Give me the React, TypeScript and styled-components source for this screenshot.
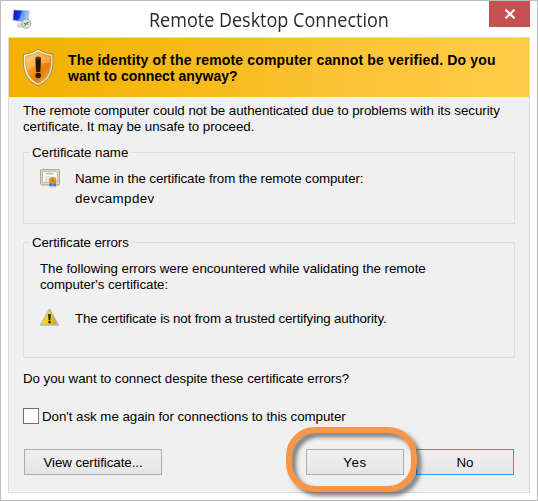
import React from 'react';
import styled, { createGlobalStyle } from 'styled-components';

const GlobalStyle = createGlobalStyle`
  * { box-sizing: border-box; }
  body { margin: 0; background: #fff; }
`;

const Window = styled.div`
  width: 538px;
  height: 501px;
  display: flex;
  flex-direction: column;
  border: 1px solid #bcbcbc;
  background: #fff;
  font: 13.333px/16px "Liberation Sans", Arial, sans-serif;
  color: #000;
  overflow: hidden;
`;

const TitleBar = styled.header`
  height: 36px;
  flex: none;
  display: flex;
  align-items: flex-start;
  padding-left: 11px;
`;

const TitleIcon = styled.svg`
  flex: none;
  width: 20px;
  height: 20px;
  margin-top: 8px;
`;

const Title = styled.h1`
  flex: 1;
  margin: 5px 0 0 117px;
  font: 400 20px/28px "Open Sans", "Noto Sans", sans-serif;
  color: #2b2b2b;
  white-space: nowrap;
  transform: scaleX(0.9);
  transform-origin: 0 50%;
`;

const CloseButton = styled.button`
  flex: none;
  width: 41px;
  height: 26px;
  margin-right: 7px;
  padding: 0;
  border: 0;
  background: #c75050;
  display: flex;
  align-items: center;
  justify-content: center;
`;

const Panel = styled.main`
  width: 522px;
  height: 456px;
  flex: none;
  margin-left: 7px;
  display: flex;
  flex-direction: column;
  border: 1px solid #dadada;
  background: #f0f0f0;
`;

const Banner = styled.section`
  height: 59px;
  flex: none;
  display: flex;
  padding: 10px 0 0 13px;
  background: linear-gradient(90deg, #f2b100 0%, #f5b710 25%, #fbc232 60%, #ffcd4a 100%);
`;

const ShieldIcon = styled.svg`
  flex: none;
  width: 33px;
  height: 39px;
`;

const BannerText = styled.h2`
  margin: 4px 0 0 13px;
  font-size: 14px;
  line-height: 16px;
  font-weight: 700;
`;

const Line = styled.span<{ $track?: number }>`
  display: block;
  height: 16px;
  white-space: nowrap;
  letter-spacing: ${({ $track = -0.05 }) => $track}px;
`;

const Content = styled.section`
  flex: 1;
  display: flex;
  flex-direction: column;
  padding: 6px 14px 0;
`;

const Group = styled.fieldset<{ $height: number; $gap: number }>`
  position: relative;
  min-width: 0;
  height: ${({ $height }) => $height}px;
  margin: ${({ $gap }) => $gap}px 0 0;
  padding: 0 0 0 16px;
  border: 1px solid #dcdcdc;
`;

const GroupLabel = styled.div`
  position: absolute;
  left: 6px;
  top: -8px;
  padding: 0 2px;
  background: #f0f0f0;
`;

const Entry = styled.div<{ $top: number; $gap: number }>`
  display: flex;
  align-items: flex-start;
  gap: ${({ $gap }) => $gap}px;
  margin-top: ${({ $top }) => $top}px;
`;

const EntryIcon = styled.svg`
  flex: none;
  width: 20px;
  height: 19px;
`;

const EntryText = styled.div<{ $offset?: number; $spacing?: number }>`
  display: grid;
  row-gap: ${({ $spacing = 0 }) => $spacing}px;
  margin-top: ${({ $offset = 0 }) => $offset}px;
`;

const Intro = styled.div`
  margin-top: 18px;
`;

const Question = styled.div`
  margin-top: 13px;
`;

const CheckRow = styled.label`
  display: flex;
  align-items: center;
  gap: 4px;
  margin-top: 21px;
`;

const CheckText = styled.span`
  margin: 1px 0 -1px -1px;
`;

const Checkbox = styled.input`
  appearance: none;
  width: 16px;
  height: 16px;
  margin: 0;
  border: 1px solid #707070;
  background: #fff;
`;

const Actions = styled.footer`
  display: flex;
  margin: 25px 1px 0 1px;
`;

const Button = styled.button<{ $width: number; $focused?: boolean }>`
  width: ${({ $width }) => $width}px;
  height: 26px;
  padding: 1px 0 0;
  display: flex;
  align-items: center;
  justify-content: center;
  border: 1px solid ${({ $focused }) => ($focused ? '#3399ff' : '#acacac')};
  background: linear-gradient(#f0f0f0, #e5e5e5);
  font: inherit;
  color: inherit;
`;

const Highlighted = styled.div`
  position: relative;
  z-index: 1;
  margin: 0 12px 0 auto;
`;

const Ring = styled.div`
  position: absolute;
  left: -20px;
  top: -22px;
  width: 131px;
  height: 65px;
  border: 6px solid #f79646;
  border-radius: 29px;
  filter: drop-shadow(4px 4px 2px rgba(0, 0, 0, 0.5));
  pointer-events: none;
`;

function RemoteDesktopIcon() {
  return (
    <TitleIcon viewBox="0 0 20 20">
      <defs>
        <linearGradient id="screen" x1="0" x2="1" y1="0" y2="0.3">
          <stop offset="0" stopColor="#0a12b8" />
          <stop offset="0.5" stopColor="#1436e0" />
          <stop offset="0.56" stopColor="#5b8cf0" />
          <stop offset="1" stopColor="#a9cbf8" />
        </linearGradient>
      </defs>
      <path d="M4 17.6l2-3.6 5 1v3.4l-4 .8z" fill="#d5d8da" />
      <path d="M.9.4l17 1-1.2 13.3L.2 11.7z" fill="#c3cede" />
      <path d="M2 1.2l14.8.9-1.1 11.2L1.3 10.8z" fill="url(#screen)" />
      <circle cx="14.3" cy="14.7" r="4.6" fill="#dfe2df" stroke="#989e9a" strokeWidth="0.9" />
      <path d="M11.8 14.4l2.2.5-1.3 2.1M16.9 13.2l-2 .6.8 2" fill="none" stroke="#3f9a50" strokeWidth="1.1" />
    </TitleIcon>
  );
}

function ShieldWarningIcon() {
  const outline = 'M16.2 1.2C20 4 25.3 5.8 30.8 6.2C31.5 17 31.8 31 16.2 37.8C.6 31 .9 17 1.6 6.2C7.1 5.8 12.4 4 16.2 1.2Z';
  return (
    <ShieldIcon viewBox="0 0 33 39">
      <defs>
        <linearGradient id="shieldFill" x1="0" y1="0" x2="1" y2="1">
          <stop offset="0" stopColor="#ffc766" />
          <stop offset="0.4" stopColor="#f79a20" />
          <stop offset="0.65" stopColor="#ea7a0a" />
          <stop offset="1" stopColor="#ffc43a" />
        </linearGradient>
        <linearGradient id="rim" x1="0" y1="0" x2="1" y2="1">
          <stop offset="0" stopColor="#fffdf2" />
          <stop offset="1" stopColor="#d8d2bd" />
        </linearGradient>
        <linearGradient id="mark" x1="0" y1="0" x2="0" y2="1">
          <stop offset="0" stopColor="#6b4a20" />
          <stop offset="0.3" stopColor="#16120e" />
          <stop offset="1" stopColor="#211406" />
        </linearGradient>
      </defs>
      <path d={outline} fill="url(#rim)" stroke="#a68b45" strokeWidth="1" />
      <path d="M16.2 3.8C19.8 6.2 24 7.7 28.7 8.2C29.2 17.6 28.6 29.4 16.2 35.3C3.8 29.4 3.2 17.6 3.7 8.2C8.4 7.7 12.6 6.2 16.2 3.8Z" fill="url(#shieldFill)" stroke="#cf8a1b" strokeWidth="0.6" />
      <path d="M4.3 8.8C9 8 13 6.5 16.2 4.4C19.5 6.5 23.4 8 28 8.8L27.8 15C20 14 12 17 5 23Q4 15 4.3 8.8Z" fill="#ffe0a0" opacity="0.35" />
      <path d="M13.4 9.5Q16.2 7.6 19 9.5L18.4 23.4Q16.2 24.4 14 23.4Z" fill="url(#mark)" />
      <circle cx="16.2" cy="27.4" r="2.7" fill="#1d1408" />
    </ShieldIcon>
  );
}

function CertificateIcon() {
  return (
    <EntryIcon viewBox="0 0 20 19">
      <rect x="0.5" y="0.5" width="19" height="15.4" rx="1" fill="#e3d8c4" stroke="#c3b69d" strokeWidth="1" />
      <rect x="0.5" y="0.5" width="19" height="15.4" rx="1" fill="none" stroke="#a8997d" strokeWidth="1" strokeDasharray="1 1" />
      <rect x="2.6" y="2.7" width="14.8" height="11" fill="#fbfcff" stroke="#b9ae98" strokeWidth="0.8" />
      <path d="M5.5 4.8h8" stroke="#8fa0bf" strokeWidth="1" />
      <path d="M4.5 8h6M4.5 10.2h5M4.5 12h4" stroke="#bcc8db" strokeWidth="0.8" />
      <path d="M9.8 13.5h2.6v4.2l-1.4-.8-1.6 1.2zM13 13.5h2.4l.9 4.5-1.7-1-1.2 1z" fill="#2472ec" />
      <circle cx="12.7" cy="11.6" r="3.4" fill="#e0a112" stroke="#b87d06" strokeWidth="0.7" />
      <circle cx="12.7" cy="11.5" r="1.3" fill="#b97900" />
    </EntryIcon>
  );
}

function WarningIcon() {
  return (
    <EntryIcon viewBox="0 0 20 19">
      <defs>
        <linearGradient id="warn" x1="0" y1="0" x2="1" y2="0.4">
          <stop offset="0" stopColor="#fff06a" />
          <stop offset="0.55" stopColor="#f8d500" />
          <stop offset="1" stopColor="#e0a800" />
        </linearGradient>
      </defs>
      <path d="M9.5 1.4L18.1 17H.9z" fill="#b4b5b8" stroke="#b4b5b8" strokeWidth="1.7" strokeLinejoin="round" />
      <path d="M9.5 2.4L17.3 16.2H1.7z" fill="url(#warn)" />
      <path d="M8.1 6h2.8l-.5 6.2H8.6z" fill="#28240c" />
      <circle cx="9.5" cy="14.1" r="1.3" fill="#28240c" />
    </EntryIcon>
  );
}

export default function App() {
  return (
    <>
      <GlobalStyle />
      <Window>
        <TitleBar>
          <RemoteDesktopIcon />
          <Title>Remote Desktop Connection</Title>
          <CloseButton aria-label="Close">
            <svg width="12" height="10" viewBox="0 0 12 10">
              <path d="M1.5.7L10.5 9.3M10.5.7L1.5 9.3" stroke="#fff" strokeWidth="2.2" />
            </svg>
          </CloseButton>
        </TitleBar>
        <Panel>
          <Banner>
            <ShieldWarningIcon />
            <BannerText>
              <Line $track={0.16}>The identity of the remote computer cannot be verified. Do you</Line>
              <Line $track={0}>want to connect anyway?</Line>
            </BannerText>
          </Banner>
          <Content>
            <Line>The remote computer could not be authenticated due to problems with its security</Line>
            <Line>certificate. It may be unsafe to proceed.</Line>
            <Group $height={72} $gap={17}>
              <GroupLabel><Line>Certificate name</Line></GroupLabel>
              <Entry $top={16} $gap={15}>
                <CertificateIcon />
                <EntryText $offset={2} $spacing={4}>
                  <Line $track={-0.1}>Name in the certificate from the remote computer:</Line>
                  <Line $track={0.4}>devcampdev</Line>
                </EntryText>
              </Entry>
            </Group>
            <Group $height={116} $gap={18}>
              <GroupLabel><Line $track={-0.1}>Certificate errors</Line></GroupLabel>
              <Intro>
                <Line>The following errors were encountered while validating the remote</Line>
                <Line $track={-0.05}>computer's certificate:</Line>
              </Intro>
              <Entry $top={15} $gap={15}>
                <WarningIcon />
                <EntryText $offset={3}>
                  <Line $track={-0.14}>The certificate is not from a trusted certifying authority.</Line>
                </EntryText>
              </Entry>
            </Group>
            <Question>
              <Line>Do you want to connect despite these certificate errors?</Line>
            </Question>
            <CheckRow>
              <Checkbox type="checkbox" />
              <CheckText>
                <Line>Don't ask me again for connections to this computer</Line>
              </CheckText>
            </CheckRow>
            <Actions>
              <Button $width={138}><Line $track={-0.07}>View certificate...</Line></Button>
              <Highlighted>
                <Button $width={98}><Line $track={0.6}>Yes</Line></Button>
                <Ring />
              </Highlighted>
              <Button $width={98} $focused><Line $track={0}>No</Line></Button>
            </Actions>
          </Content>
        </Panel>
      </Window>
    </>
  );
}
